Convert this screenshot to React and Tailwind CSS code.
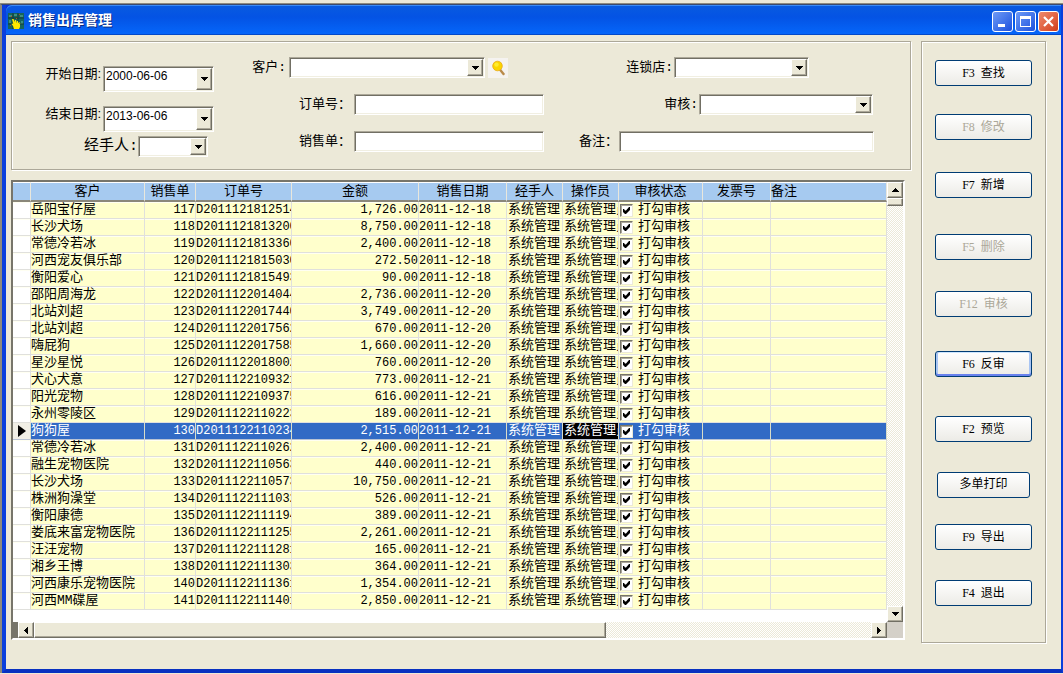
const rows = [
  ['岳阳宝仔屋', 117, 'D2011121812514', '1,726.00', '2011-12-18'],
  ['长沙犬场', 118, 'D2011121813200', '8,750.00', '2011-12-18'],
  ['常德冷若冰', 119, 'D2011121813360', '2,400.00', '2011-12-18'],
  ['河西宠友俱乐部', 120, 'D2011121815030', '272.50', '2011-12-18'],
  ['衡阳爱心', 121, 'D2011121815493', '90.00', '2011-12-18'],
  ['邵阳周海龙', 122, 'D2011122014044', '2,736.00', '2011-12-20'],
  ['北站刘超', 123, 'D2011122017440', '3,749.00', '2011-12-20'],
  ['北站刘超', 124, 'D2011122017562', '670.00', '2011-12-20'],
  ['嗨屁狗', 125, 'D2011122017585', '1,660.00', '2011-12-20'],
  ['星沙星悦', 126, 'D2011122018002', '760.00', '2011-12-20'],
  ['犬心犬意', 127, 'D2011122109321', '773.00', '2011-12-21'],
  ['阳光宠物', 128, 'D2011122109375', '616.00', '2011-12-21'],
  ['永州零陵区', 129, 'D2011122110223', '189.00', '2011-12-21'],
  ['狗狗屋', 130, 'D2011122110234', '2,515.00', '2011-12-21'],
  ['常德冷若冰', 131, 'D2011122110262', '2,400.00', '2011-12-21'],
  ['融生宠物医院', 132, 'D2011122110563', '440.00', '2011-12-21'],
  ['长沙犬场', 133, 'D2011122110573', '10,750.00', '2011-12-21'],
  ['株洲狗澡堂', 134, 'D2011122111032', '526.00', '2011-12-21'],
  ['衡阳康德', 135, 'D2011122111194', '389.00', '2011-12-21'],
  ['娄底来富宠物医院', 136, 'D2011122111255', '2,261.00', '2011-12-21'],
  ['汪汪宠物', 137, 'D2011122111281', '165.00', '2011-12-21'],
  ['湘乡王博', 138, 'D2011122111303', '364.00', '2011-12-21'],
  ['河西康乐宠物医院', 140, 'D2011122111361', '1,354.00', '2011-12-21'],
  ['河西MM碟屋', 141, 'D2011122111401', '2,850.00', '2011-12-21'],
]

const columns = [
  { title: '', width: 'w-[18px]' },
  { title: '客户', width: 'w-[114px]' },
  { title: '销售单', width: 'w-[51px]' },
  { title: '订单号', width: 'w-[96px]' },
  { title: '金额', width: 'w-[127px]' },
  { title: '销售日期', width: 'w-[88px]' },
  { title: '经手人', width: 'w-[56px]' },
  { title: '操作员', width: 'w-[56px]' },
  { title: '审核状态', width: 'w-[84px]' },
  { title: '发票号', width: 'w-[68px]' },
  { title: '备注', width: 'w-auto', left: true },
]

const actions = [
  { hotkey: 'F3', text: '查找', space: 'mt-[18px]' },
  { hotkey: 'F8', text: '修改', space: 'mt-7', disabled: true },
  { hotkey: 'F7', text: '新增', space: 'mt-8' },
  { hotkey: 'F5', text: '删除', space: 'mt-9', disabled: true },
  { hotkey: 'F12', text: '审核', space: 'mt-[31px]', disabled: true },
  { hotkey: 'F6', text: '反审', space: 'mt-[34px]', focused: true },
  { hotkey: 'F2', text: '预览', space: 'mt-[39px]' },
  { text: '多单打印', space: 'mt-[30px]', narrow: true },
  { hotkey: 'F9', text: '导出', space: 'mt-[26px]' },
  { hotkey: 'F4', text: '退出', space: 'mt-[30px]' },
]

const SELECTED = 130

const raised =
  'flex items-center justify-center bg-[#ece9d8] border border-t-white border-l-white border-r-[#716f64] border-b-[#716f64] shadow-[inset_-1px_-1px_0_#aca899]'
const sunken =
  'bg-white p-px border border-t-[#aca899] border-l-[#aca899] border-r-white border-b-white shadow-[inset_1px_1px_0_#716f64,inset_-1px_-1px_0_#f1efe2]'
const etched = 'border border-[#aca899] shadow-[inset_1px_1px_0_#fff,1px_1px_0_#fff]'
const track = 'bg-[repeating-conic-gradient(#fff_0_25%,#ece9d8_0_50%)] bg-size-[2px_2px]'

const arrows = {
  down: 'M0 0h7v1h-1v1h-1v1h-1v1h-1v-1h-1v-1h-1v-1h-1z',
  up: 'M3 0h1v1h1v1h1v1h1v1h-7v-1h1v-1h1v-1h1z',
  left: 'M3 0h1v7h-1v-1h-1v-1h-1v-1h-1v-1h1v-1h1v-1h1z',
  right: 'M0 0h1v1h1v1h1v1h1v1h-1v1h-1v1h-1v1h-1z',
}

function Arrow({ dir }) {
  const flat = dir === 'up' || dir === 'down'
  return (
    <svg width={flat ? 7 : 4} height={flat ? 4 : 7} aria-hidden="true">
      <path d={arrows[dir]} fill="#000" />
    </svg>
  )
}

function Label({ id, className = '', children }) {
  return (
    <label htmlFor={id} className={`shrink-0 text-right leading-4 whitespace-nowrap ${className}`}>
      {children}
    </label>
  )
}

function DateBox({ id, value }) {
  return (
    <div className={`flex h-[26px] w-[111px] ${sunken}`}>
      <input
        id={id}
        defaultValue={value}
        className="w-0 flex-1 self-start pl-px text-xs leading-4 font-[Liberation_Sans] outline-none"
      />
      <button type="button" aria-label="选择日期" className={`w-4 ${raised}`}>
        <Arrow dir="down" />
      </button>
    </div>
  )
}

function SelectBox({ id, width }) {
  return (
    <div className={`relative h-[21px] ${width} ${sunken}`}>
      <select id={id} className="block h-full w-full appearance-none bg-white outline-none">
        <option value=""></option>
      </select>
      <span className={`pointer-events-none absolute inset-y-px right-px w-4 ${raised}`}>
        <Arrow dir="down" />
      </span>
    </div>
  )
}

function TextBox({ id, width }) {
  return <input id={id} className={`h-[21px] text-xs outline-none ${width} ${sunken}`} />
}

function TitleBar() {
  const box = 'flex h-[21px] w-[21px] items-center justify-center rounded-[3px] border border-white'
  return (
    <header className="flex h-[30px] items-center rounded-tl-md bg-linear-to-b from-[#0a5be0] from-0% via-[#0453e4] via-40% to-[#0667fb] pt-0.5 pr-0.5 pl-0.5 shadow-[inset_0_1px_0_#3c8cf5,inset_0_-1px_0_#0349c8]">
      <svg width="16" height="16" viewBox="0 0 16 16" aria-hidden="true">
        <rect width="16" height="16" fill="#17655c" />
        <path d="M1 2h3v2h-3zM6 1h3v2h-3zM12 2h3v2h-3zM1 7h2v3h-2zM13 8h2v3h-2z" fill="#3c8f80" />
        <path d="M0 5h16M0 11h16M5 0v16M10 0v16" stroke="#173a3a" />
        <path d="M3 3h1v1h-1zM11 1h1v1h-1zM2 12h1v1h-1zM8 5h1v1h-1z" fill="#b04a30" />
        <path
          d="M4 6h1.5l1.5 3V7h1.200v2.500h.6V8h1.200v2h.6V9h1v2h.6v-1H12v4l-1 2H6l-1-3-1.500-2 1-.6.800.8z"
          fill="#ffe900"
        />
      </svg>
      <h1 className="ml-1 flex-1 text-sm leading-5 font-bold text-white [text-shadow:1px_1px_0_#0a2a80]">
        销售出库管理
      </h1>
      <div className="flex gap-0.5">
        <button type="button" aria-label="最小化" className={`${box} bg-linear-to-br from-[#6f9af5] to-[#1c4ede]`}>
          <svg width="15" height="15" aria-hidden="true">
            <path d="M3 10h7v3h-7z" fill="#fff" />
          </svg>
        </button>
        <button type="button" aria-label="最大化" className={`${box} bg-linear-to-br from-[#6f9af5] to-[#1c4ede]`}>
          <svg width="15" height="15" aria-hidden="true">
            <path d="M2 2h11v11h-11zM3 5v7h9v-7z" fill="#fff" fillRule="evenodd" />
          </svg>
        </button>
        <button type="button" aria-label="关闭" className={`${box} bg-linear-to-br from-[#ee8a6c] to-[#d23a12]`}>
          <svg width="15" height="15" aria-hidden="true">
            <path d="M3 3l9 9M12 3l-9 9" stroke="#fff" strokeWidth="2.2" />
          </svg>
        </button>
      </div>
    </header>
  )
}

function Filters() {
  return (
    <form className={`flex h-[129px] text-[13px] ${etched}`}>
      <div className="w-[230px] pt-6">
        <div className="flex gap-0.5">
          <Label id="from" className="w-[89px] font-['Liberation_Sans','Noto_Sans_CJK_SC',sans-serif]">开始日期:</Label>
          <DateBox id="from" value="2000-06-06" />
        </div>
        <div className="mt-3.5 flex gap-0.5">
          <Label id="to" className="w-[89px] font-['Liberation_Sans','Noto_Sans_CJK_SC',sans-serif]">结束日期:</Label>
          <DateBox id="to" value="2013-06-06" />
        </div>
        <div className="mt-1 flex items-center">
          <Label id="handler" className="w-[126px] text-[15px]">经手人:</Label>
          <SelectBox id="handler" width="w-[70px]" />
        </div>
      </div>

      <div className="flex w-[318px] flex-col gap-4 pt-[15px]">
        <div className="flex items-center gap-[3px]">
          <Label id="customer" className="w-11">客户:</Label>
          <SelectBox id="customer" width="w-[196px]" />
          <button type="button" aria-label="查找客户" className="flex h-5 w-5 items-center justify-center bg-[#f5f3f0]">
            <svg width="16" height="16" viewBox="0 0 16 16" aria-hidden="true">
              <path d="M9.500 9l4 5" stroke="#b98a4a" strokeWidth="2.400" strokeLinecap="round" />
              <circle cx="7.500" cy="6" r="4.800" fill="#fbd500" stroke="#e9a91c" strokeWidth=".8" />
              <circle cx="6.500" cy="4.600" r="2.200" fill="#ffec30" />
            </svg>
          </button>
        </div>
        <div className="flex items-center">
          <Label id="order" className="w-28 pr-[3px]">订单号：</Label>
          <TextBox id="order" width="w-[190px]" />
        </div>
        <div className="flex items-center">
          <Label id="sale" className="w-28 pr-[3px]">销售单：</Label>
          <TextBox id="sale" width="w-[190px]" />
        </div>
      </div>

      <div className="flex flex-1 flex-col gap-4 pt-[15px]">
        <div className="flex items-center gap-px">
          <Label id="shop" className="w-[113px]">连锁店:</Label>
          <SelectBox id="shop" width="w-[135px]" />
        </div>
        <div className="flex items-center gap-px">
          <Label id="audit" className="w-[138px]">审核:</Label>
          <SelectBox id="audit" width="w-[174px]" />
        </div>
        <div className="flex items-center gap-px">
          <Label id="remark" className="w-[58px]">备注：</Label>
          <TextBox id="remark" width="w-[255px]" />
        </div>
      </div>
    </form>
  )
}

function OrderRow({ row }) {
  const [customer, saleNo, orderNo, amount, date] = row
  const selected = saleNo === SELECTED
  const cell = `overflow-hidden p-0 whitespace-nowrap border-r border-b ${
    selected ? 'border-r-[#d8dcc8] border-b-[#b9c3d4]' : 'border-[#e0e0dc] shadow-[inset_0_1px_0_#fffff2]'
  }`
  const num = 'font-[Liberation_Mono] text-xs leading-4'
  return (
    <tr className={`h-[17px] ${selected ? 'bg-[#316ac5] text-white' : 'bg-[#ffffcc]'}`}>
      <td className={`${cell} ${selected ? 'bg-[#f1efe6]' : 'bg-white'}`}>
        {selected && (
          <svg width="8" height="12" className="ml-[5px]" aria-hidden="true">
            <path d="M0 0l8 6l-8 6z" fill="#000" />
          </svg>
        )}
      </td>
      <td className={cell}>{customer}</td>
      <td className={`${cell} ${num} text-right`}>{saleNo}</td>
      <td className={`${cell} ${num}`}>{orderNo}</td>
      <td className={`${cell} ${num} text-right`}>{amount}</td>
      <td className={`${cell} ${num}`}>{date}</td>
      <td className={cell}><span className="pl-px">系统管理</span></td>
      <td className={`${cell} ${selected ? 'bg-black' : ''}`}><span className="pl-px">系统管理员</span></td>
      <td className={cell}>
        <label className="flex h-4 items-center gap-[5px]">
          <span className="relative ml-px h-[13px] w-[13px]">
            <input
              type="checkbox"
              defaultChecked
              className="block h-[13px] w-[13px] appearance-none border border-t-[#77756a] border-l-[#77756a] border-r-[#ece9d8] border-b-[#ece9d8] bg-white shadow-[inset_1px_1px_0_#aca899]"
            />
            <svg width="7" height="7" className="pointer-events-none absolute top-[3px] left-[3px]" aria-hidden="true">
              <path d="M0 2v3l2 2h1l4-4V0h-1L3 3.500H2L1 2z" fill="#000" />
            </svg>
          </span>
          打勾审核
        </label>
      </td>
      <td className={cell}></td>
      <td className={cell}></td>
    </tr>
  )
}

function Grid() {
  return (
    <div className="mr-[6px] border-2 border-t-[#77756a] border-l-[#77756a] border-r-white border-b-white bg-white">
      <div className="flex">
        <div className="min-w-0 flex-1 pb-3">
          <table className="w-full table-fixed border-separate border-spacing-0 text-[13px] leading-4">
            <thead>
              <tr className="h-5 bg-[#a6caf0]">
                {columns.map((col, i) => (
                  <th
                    key={i}
                    className={`overflow-hidden border-t border-r border-b-2 border-t-white border-r-[#e9e7dc] border-b-[#8a877a] p-0 font-normal whitespace-nowrap ${
                      col.left ? 'text-left' : 'text-center'
                    } ${col.width}`}
                  >
                    {col.title}
                  </th>
                ))}
              </tr>
            </thead>
            <tbody>
              {rows.map((row) => (
                <OrderRow key={row[1]} row={row} />
              ))}
            </tbody>
          </table>
        </div>
        <div className={`flex w-4 flex-col ${track}`}>
          <button type="button" aria-label="向上滚动" className={`h-4 ${raised}`}>
            <Arrow dir="up" />
          </button>
          <div className={`h-2 ${raised}`} />
          <div className="flex-1" />
          <button type="button" aria-label="向下滚动" className={`h-4 ${raised}`}>
            <Arrow dir="down" />
          </button>
        </div>
      </div>
      <div className={`flex h-4 ${track}`}>
        <div className="w-[5px] bg-[#77756a]" />
        <button type="button" aria-label="向左滚动" className={`w-4 ${raised}`}>
          <Arrow dir="left" />
        </button>
        <div className={`w-[572px] ${raised}`} />
        <div className="flex-1" />
        <button type="button" aria-label="向右滚动" className={`w-4 ${raised}`}>
          <Arrow dir="right" />
        </button>
        <div className="w-4 bg-[#d4d0c8]" />
      </div>
    </div>
  )
}

function ActionButton({ action }) {
  const { hotkey, text, space, disabled, focused, narrow } = action
  return (
    <button
      type="button"
      disabled={disabled}
      className={`h-[26px] rounded-[3px] border border-[#003c74] bg-linear-to-b from-white to-[#ecebe6] text-xs leading-4 ${space} ${
        narrow ? 'w-[93px]' : 'w-[97px]'
      } ${disabled ? 'text-[#aca899]' : 'text-black'} ${
        focused ? 'shadow-[inset_0_-2px_0_#6982ee,inset_2px_0_0_#a9c5f3,inset_-2px_0_0_#a9c5f3,inset_0_1px_0_#cee7ff]' : ''
      }`}
    >
      {hotkey && <span className="mr-1.5 font-[Liberation_Serif]">{hotkey}</span>}
      {text}
    </button>
  )
}

export default function App() {
  return (
    <div className="flex min-h-screen flex-col bg-[#ece9d8] pb-px font-['Liberation_Mono','Noto_Sans_CJK_SC',monospace] text-black">
      <div className="h-1 border-b border-[#8d8a7d]" />
      <div className="flex flex-1 flex-col border-t border-l-2 border-t-[#3a4a70] border-l-[#8d8a7d] bg-[#0831d9]">
        <div className="flex flex-1 flex-col border-r-2 border-b-4 border-l-4 border-[#0a3fdc] border-b-[#0831c0]">
          <TitleBar />
          <div className="flex flex-1 gap-2.5 bg-[#ece9d8] pt-1.5 pr-[15px] pb-[26px] pl-[5px]">
            <main className="flex min-w-0 flex-1 flex-col gap-2.5">
              <Filters />
              <Grid />
            </main>
            <aside className={`flex w-[125px] flex-col items-center ${etched}`}>
              {actions.map((action) => (
                <ActionButton key={action.text} action={action} />
              ))}
            </aside>
          </div>
        </div>
      </div>
    </div>
  )
}
